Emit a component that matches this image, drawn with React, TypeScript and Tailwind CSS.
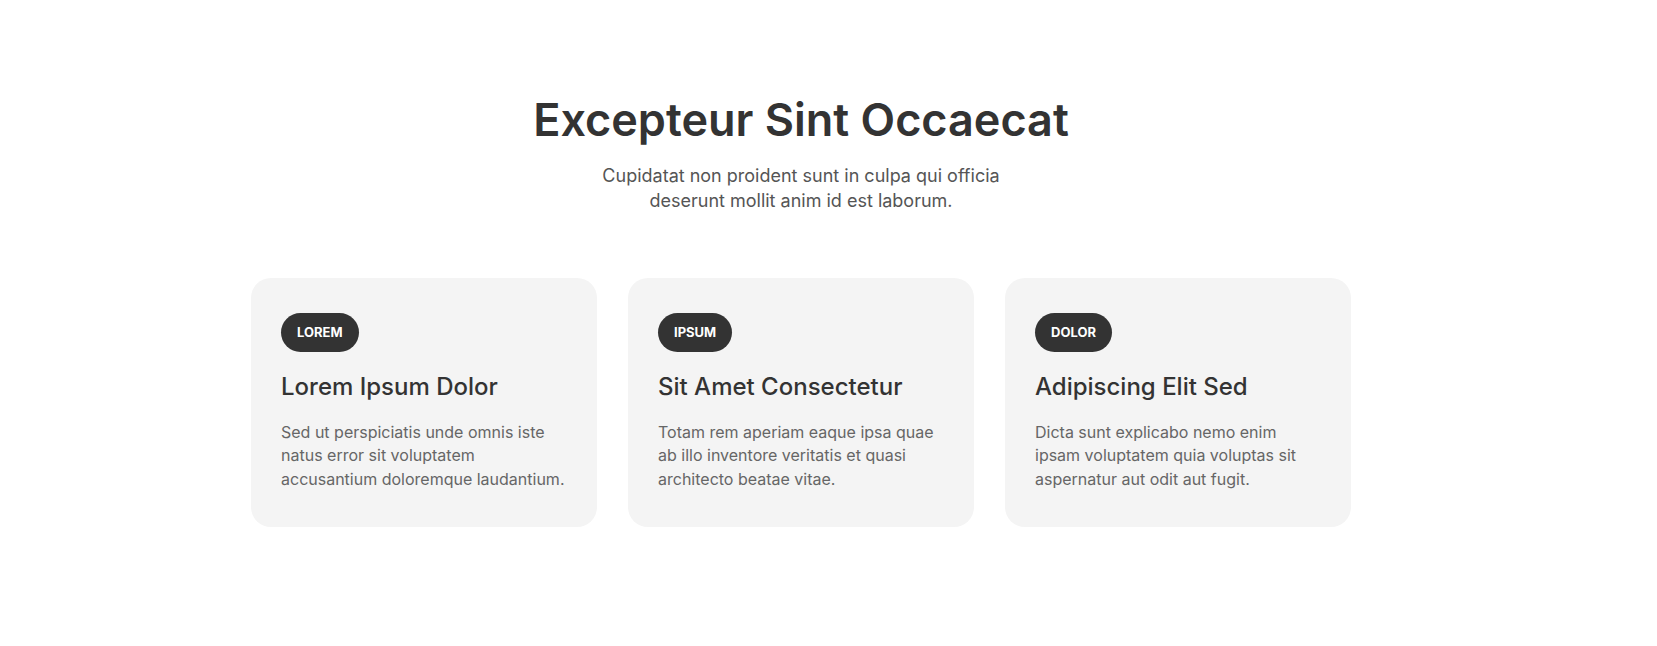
import React from 'react';

const cards = [
  {
    tag: 'LOREM',
    title: 'Lorem Ipsum Dolor',
    text: 'Sed ut perspiciatis unde omnis iste natus error sit voluptatem accusantium doloremque laudantium.',
  },
  {
    tag: 'IPSUM',
    title: 'Sit Amet Consectetur',
    text: 'Totam rem aperiam eaque ipsa quae ab illo inventore veritatis et quasi architecto beatae vitae.',
  },
  {
    tag: 'DOLOR',
    title: 'Adipiscing Elit Sed',
    text: 'Dicta sunt explicabo nemo enim ipsam voluptatem quia voluptas sit aspernatur aut odit aut fugit.',
  },
];

const App = () => {
  return (
    <div className="min-h-screen bg-white font-['Inter',sans-serif] text-[#333]">
      <section className="w-[1602px] pt-[93px] pb-[118px]">
        {/* Heading */}
        <div className="text-center">
          <h1 className="text-[45px] leading-[1.2] font-semibold text-[#333]">
            Excepteur Sint Occaecat
          </h1>
          <p className="mx-auto mt-4 max-w-[420px] text-[18px] leading-[25px] text-[#555]">
            Cupidatat non proident sunt in culpa qui officia deserunt mollit anim id est laborum.
          </p>
        </div>

        {/* Cards */}
        <div className="mx-auto mt-[65px] grid max-w-[1100px] grid-cols-3 gap-[31px]">
          {cards.map((card) => (
            <div key={card.tag} className="rounded-[20px] bg-[#f4f4f4] px-[30px] pt-[35px] pb-[36px]">
              <span className="inline-flex h-[39px] items-center rounded-full bg-[#333] px-4 text-[13px] font-bold text-white">
                {card.tag}
              </span>
              <h3 className="mt-[19px] text-[24px] leading-[31px] font-medium text-[#333]">
                {card.title}
              </h3>
              <p className="mt-[19px] text-[16px] leading-[23.3px] text-[#666]">
                {card.text}
              </p>
            </div>
          ))}
        </div>
      </section>
    </div>
  );
};

export default App;
